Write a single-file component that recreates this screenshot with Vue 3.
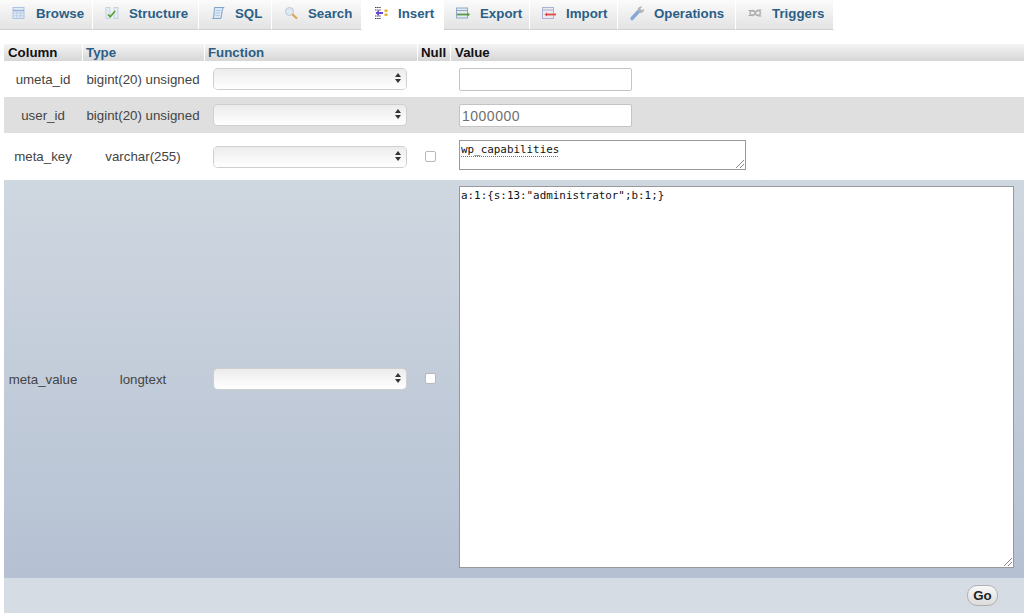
<script setup>
const tabs = [
  { name: 'Browse', w: 93, icon: 'browse' },
  { name: 'Structure', w: 106, icon: 'structure' },
  { name: 'SQL', w: 73, icon: 'sql' },
  { name: 'Search', w: 90, icon: 'search' },
  { name: 'Insert', w: 82, icon: 'insert', active: true },
  { name: 'Export', w: 86, icon: 'export' },
  { name: 'Import', w: 88, icon: 'import' },
  { name: 'Operations', w: 118, icon: 'ops' },
  { name: 'Triggers', w: 98, icon: 'triggers' }
]
const rows = [
  { col: 'umeta_id', type: 'bigint(20) unsigned', cls: 'r1', input: '' },
  { col: 'user_id', type: 'bigint(20) unsigned', cls: 'r2', input: '1000000' },
  { col: 'meta_key', type: 'varchar(255)', cls: 'r3', area: 'wp_capabilities', check: true },
  { col: 'meta_value', type: 'longtext', cls: 'r4', area: 'a:1:{s:13:"administrator";b:1;}', check: true, big: true }
]
</script>

<template>
  <div class="page">
    <nav class="tabs">
      <a v-for="t in tabs" :key="t.name" class="tab" :class="{ active: t.active }" :style="{ width: t.w + 'px' }">
        <svg class="ico" viewBox="0 0 16 16" width="16" height="16">
          <template v-if="t.icon === 'browse'">
            <rect x="2" y="2.5" width="11" height="11" fill="#e3ebf5" stroke="#a9c3e2" />
            <path d="M2 5.5h11" stroke="#8fb0d6" stroke-width="1.4" fill="none" />
            <path d="M2 8h11M2 10.8h11M5.8 5.5v8M9.4 5.5v8" stroke="#b9cde4" fill="none" />
          </template>
          <template v-else-if="t.icon === 'structure'">
            <rect x="2" y="2.5" width="4" height="11" fill="#e6ecf4" stroke="#c4d2e2" />
            <rect x="10" y="2.5" width="4" height="11" fill="#e6ecf4" stroke="#c4d2e2" />
            <path d="M4 9.5l2.2 2.2 5-5.7" stroke="#5aa032" stroke-width="1.7" fill="none" />
          </template>
          <template v-else-if="t.icon === 'sql'">
            <path d="M4.5 2.5h9.5l-1.5 1.5-1.5 9.5H2.5l1.2-1.5z" fill="#dbe7f5" stroke="#7fa3cd" stroke-linejoin="round" />
            <path d="M6 5.5h4.5M5.7 8h4.5M5.3 10.5h4.5" stroke="#b2c9e3" fill="none" />
          </template>
          <template v-else-if="t.icon === 'search'">
            <circle cx="6.5" cy="6.5" r="4" fill="#dfe9f4" stroke="#bcc8d4" />
            <path d="M9.8 9.8l3.6 3.2" stroke="#d9a45c" stroke-width="2.2" stroke-linecap="round" fill="none" />
          </template>
          <template v-else-if="t.icon === 'insert'">
            <path d="M2 2.5h6M2 5h6M2 11h6M2 13.5h6" stroke="#444" stroke-dasharray="1.5 .6" fill="none" />
            <path d="M3 8h7" stroke="#6a48d0" stroke-width="2" fill="none" />
            <path d="M6 5L2.5 8 6 11z" fill="#6a48d0" />
            <rect x="11.5" y="4.5" width="3" height="2.4" fill="#e0b020" />
            <rect x="11.5" y="8.5" width="3" height="2.4" fill="#e0b020" />
          </template>
          <template v-else-if="t.icon === 'export'">
            <rect x="1.5" y="3" width="11" height="10" fill="#e3eaf3" stroke="#8fa9c6" />
            <path d="M1.5 5.5h11" stroke="#8fa9c6" />
            <path d="M2 9.5h11" stroke="#5c9c3c" stroke-width="1.8" fill="none" />
            <path d="M12.5 7.5l2.5 2-2.5 2z" fill="#5c9c3c" />
          </template>
          <template v-else-if="t.icon === 'import'">
            <rect x="1.5" y="2.5" width="11" height="11" fill="#ebe9f2" stroke="#a8b4d2" />
            <path d="M1.5 5h11" stroke="#a8b4d2" />
            <path d="M5 9.5h10" stroke="#dd4b40" stroke-width="1.8" fill="none" />
            <path d="M6 7.5l-2.5 2 2.5 2z" fill="#dd4b40" />
          </template>
          <template v-else-if="t.icon === 'ops'">
            <path d="M3 13.5l6.5-7" stroke="#86a6d8" stroke-width="3.4" stroke-linecap="round" fill="none" />
            <path d="M8.7 5.5a3.4 3.4 0 0 1 4.6-3.7l-2 2 1.5 1.5 2-1.6A3.4 3.4 0 0 1 10.8 8z" fill="#b0b4ba" />
          </template>
          <template v-else>
            <circle cx="5.5" cy="8" r="2.4" fill="none" stroke="#b4b4b4" stroke-width="1.5" />
            <circle cx="11" cy="8" r="2.4" fill="none" stroke="#b4b4b4" stroke-width="1.5" />
            <path d="M1.5 5.5h3l2 1M1.5 10.5h3l2-1M14.5 5h-3l-2 1.5M14.5 11h-3l-2-1.5" stroke="#a8a8a8" fill="none" />
          </template>
        </svg>
        <span>{{ t.name }}</span>
      </a>
    </nav>

    <div class="table">
      <div class="head">
        <div class="c1 th">Column</div>
        <div class="c2 th link">Type</div>
        <div class="c3 th link">Function</div>
        <div class="c4 th">Null</div>
        <div class="c5 th">Value</div>
      </div>
      <div v-for="r in rows" :key="r.col" class="row" :class="r.cls">
        <div class="c1 cell center">{{ r.col }}</div>
        <div class="c2 cell center">{{ r.type }}</div>
        <div class="c3 cell"><div class="sel"><span class="arrows"></span></div></div>
        <div class="c4 cell"><span v-if="r.check" class="chk"></span></div>
        <div class="c5 cell">
          <div v-if="r.area" class="area" :class="{ big: r.big }">
            <span :class="{ squiggle: !r.big }">{{ r.area }}</span>
            <svg class="grip" viewBox="0 0 8 8" width="8" height="8"><path d="M0 8L8 0M4 8L8 4" stroke="#888" fill="none" /></svg>
          </div>
          <div v-else class="inp">{{ r.input }}</div>
        </div>
      </div>
      <div class="foot"><button class="go">Go</button></div>
    </div>
  </div>
</template>

<style scoped>
.page {
  width: 1024px;
  height: 616px;
  overflow: hidden;
  background: #fff;
  font-family: "Liberation Sans", Arial, sans-serif;
  font-size: 13.3px;
  color: #444;
}
.tabs {
  display: flex;
  height: 30px;
  width: 834px;
}
.tab {
  box-sizing: border-box;
  display: flex;
  align-items: center;
  gap: 9px;
  padding: 0 0 3px 11px;
  border-right: 1px solid #fff;
  border-bottom: 1px solid #cfcfcf;
  color: #2b5f87;
  font-weight: bold;
  font-size: 13.3px;
  background: linear-gradient(#fbfbfb, #e3e3e3);
}
.tab.active {
  padding-bottom: 4px;
  background: #fff;
  border-bottom: 0;
}
.ico { flex: none; }
.table {
  margin: 14px 0 0 4px;
  width: 1020px;
}
.head {
  display: grid;
  grid-template-columns: 78px 122px 213px 33px 574px;
  height: 17px;
  background: linear-gradient(#f4f4f4, #d6d6d6);
}
.th {
  font-weight: bold;
  color: #111;
  line-height: 17px;
  padding-left: 3px;
  border-left: 1px solid #fff;
  white-space: nowrap;
}
.th.c1 { border-left: 0; padding-left: 4px; }
.th.c5 { padding-left: 4px; }
.th.link { color: #2b5f87; }
.row {
  display: grid;
  grid-template-columns: 78px 122px 213px 33px 574px;
  align-items: center;
}
.cell { white-space: nowrap; }
.center { text-align: center; }
.r1 { height: 36px; background: #fff; }
.r2 { height: 36px; background: #dfdfdf; }
.r3 { height: 47px; background: #fff; }
.r4 { height: 398px; background: linear-gradient(#cfd7e0, #b5c1d3); }
.sel {
  position: relative;
  width: 192px;
  height: 20px;
  margin-left: 10px;
  border-radius: 4px;
  background: linear-gradient(#ececec, #fff);
  box-shadow: 0 0 0 1px #cfcfcf;
}
.arrows {
  position: absolute;
  right: 8px;
  top: 4px;
  width: 0;
  height: 0;
}
.arrows::before,
.arrows::after {
  content: "";
  position: absolute;
  left: -3px;
  border-left: 3px solid transparent;
  border-right: 3px solid transparent;
}
.arrows::before { top: 0; border-bottom: 4px solid #333; }
.arrows::after { top: 6px; border-top: 4px solid #333; }
.chk {
  display: block;
  box-sizing: border-box;
  width: 11px;
  height: 11px;
  margin: 0 0 1px 8px;
  border: 1px solid #b8b8b8;
  border-radius: 2px;
  background: #fff;
}
.inp {
  box-sizing: border-box;
  width: 173px;
  height: 23px;
  margin: 1px 0 0 9px;
  padding-left: 2px;
  border: 1px solid #c4c4c4;
  border-radius: 2px;
  background: #fff;
  color: #6f6f6f;
  font-size: 14px;
  line-height: 22px;
  letter-spacing: 0.5px;
}
.area {
  box-sizing: border-box;
  position: relative;
  width: 287px;
  height: 30px;
  margin: 0 0 4px 9px;
  padding: 2px 1px;
  border: 1px solid #999;
  background: #fff;
  font-family: "DejaVu Sans Mono", monospace;
  font-size: 10.9px;
  line-height: 14px;
  color: #111;
}
.area.big {
  width: 555px;
  height: 382px;
}
.squiggle {
  text-decoration: underline dotted #e8403a;
  text-decoration-thickness: 1px;
  text-underline-offset: 3px;
}
.grip { position: absolute; right: 1px; bottom: 1px; }
.foot {
  display: flex;
  justify-content: flex-end;
  align-items: center;
  height: 35px;
  padding-right: 26px;
  background: #d5dce4;
}
.go {
  width: 31px;
  height: 21px;
  padding: 0;
  border: 1px solid #b0b0b0;
  border-radius: 10px;
  background: linear-gradient(#f8f8f8, #dcdcdc);
  font-family: "Liberation Sans", Arial, sans-serif;
  font-size: 13.3px;
  font-weight: bold;
  color: #222;
}
</style>
